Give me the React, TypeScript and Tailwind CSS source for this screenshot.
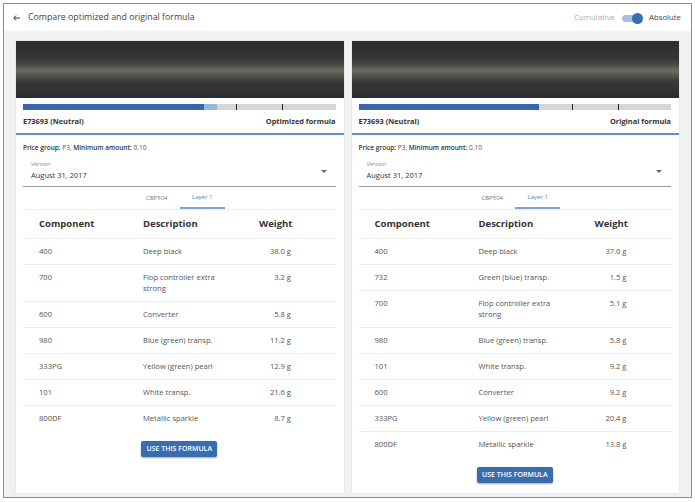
import React from 'react';

type Row = { code: string; desc: string; weight: string };

const optimized: Row[] = [
  { code: '400', desc: 'Deep black', weight: '38.0 g' },
  { code: '700', desc: 'Flop controller extra strong', weight: '3.2 g' },
  { code: '600', desc: 'Converter', weight: '5.8 g' },
  { code: '980', desc: 'Blue (green) transp.', weight: '11.2 g' },
  { code: '333PG', desc: 'Yellow (green) pearl', weight: '12.9 g' },
  { code: '101', desc: 'White transp.', weight: '21.6 g' },
  { code: '800DF', desc: 'Metallic sparkle', weight: '8.7 g' },
];

const original: Row[] = [
  { code: '400', desc: 'Deep black', weight: '37.0 g' },
  { code: '732', desc: 'Green (blue) transp.', weight: '1.5 g' },
  { code: '700', desc: 'Flop controller extra strong', weight: '5.1 g' },
  { code: '980', desc: 'Blue (green) transp.', weight: '5.8 g' },
  { code: '101', desc: 'White transp.', weight: '9.2 g' },
  { code: '600', desc: 'Converter', weight: '9.2 g' },
  { code: '333PG', desc: 'Yellow (green) pearl', weight: '20.4 g' },
  { code: '800DF', desc: 'Metallic sparkle', weight: '13.8 g' },
];

function ProgressBar({ blue, light }: { blue: number; light?: number }) {
  return (
    <div className="relative h-[6px] bg-[#d6d6d6]">
      {light && <div className="absolute left-0 top-0 h-full bg-[#9ab6da]" style={{ width: `${light}%` }} />}
      <div className="absolute left-0 top-0 h-full bg-[#3768ad]" style={{ width: `${blue}%` }} />
      <div className="absolute top-0 h-full w-px bg-[#222]" style={{ left: '68.3%' }} />
      <div className="absolute top-0 h-full w-px bg-[#222]" style={{ left: '83%' }} />
    </div>
  );
}

function FormulaCard({ label, rows, blue, light }: { label: string; rows: Row[]; blue: number; light?: number }) {
  return (
    <div className="bg-white flex flex-col shadow-[0_0_1px_rgba(0,0,0,0.2)]">
      <div className="h-[57px] bg-[linear-gradient(180deg,#2b2e2c_0%,#333633_30%,#4b4c46_42%,#6c6c60_52%,#55564f_60%,#363935_72%,#2a2d2b_100%)]" />
      <div className="pt-[6px] pl-[7px] pr-[8px]">
        <ProgressBar blue={blue} light={light} />
      </div>
      <div className="h-[25px] pl-[7px] pr-[8px] flex items-center justify-between border-b-2 border-[#5f90d2] text-[7.4px] font-bold text-[#333]">
        <span>E73693 (Neutral)</span>
        <span>{label}</span>
      </div>
      <div className="pl-[7px] pr-[8px]">
        <div className="pt-[9px] text-[6.5px] text-[#555] leading-[8px]">
          <span className="font-semibold text-[#333]">Price group:</span> P3, <span className="font-semibold text-[#333]">Minimum amount:</span> 0.10
        </div>
        <div className="mt-[9px] border-b border-[#9a9a9a] pl-[8px] pr-[9px] pb-[5px] flex items-end justify-between">
          <div>
            <div className="text-[5.5px] text-[#888] leading-[7px]">Version</div>
            <div className="text-[7.5px] text-[#333] leading-[11px] mt-[2px]">August 31, 2017</div>
          </div>
          <svg width="6" height="4" viewBox="0 0 6 4" className="mb-[7px]">
            <path d="M0 0 L6 0 L3 3 Z" fill="#666" />
          </svg>
        </div>
        <div className="flex justify-center border-b border-[#ececec] text-[6px]">
          <div className="w-[46px] h-[22px] flex items-center justify-center text-[#777]">CBP504</div>
          <div className="w-[45px] h-[22px] flex items-center justify-center text-[#4a7fc4] border-b-2 border-[#7ea3d6] mb-[-1px]">Layer 1</div>
        </div>
        <div className="grid grid-cols-[104px_116px_32px] pl-[16px] py-[8px] leading-[12px] border-b border-[#ececec] text-[9.5px] font-bold text-[#333]">
          <span>Component</span>
          <span>Description</span>
          <span className="text-right whitespace-nowrap">Weight</span>
        </div>
        {rows.map((r, i) => (
          <div
            key={r.code + i}
            className={`grid grid-cols-[104px_84px_64px] pl-[16px] py-[7px] leading-[11px] text-[7.6px] text-[#555] ${i < rows.length - 1 ? 'border-b border-[#ececec]' : ''}`}
          >
            <span>{r.code}</span>
            <span>{r.desc}</span>
            <span className="text-right">{r.weight}</span>
          </div>
        ))}
        <div className="flex justify-center mt-[10px]">
          <button className="w-[76px] h-[16px] rounded-[2px] bg-[#3a6cb0] text-white text-[7px] font-semibold shadow-[0_1px_2px_rgba(0,0,0,0.35)]">
            USE THIS FORMULA
          </button>
        </div>
      </div>
    </div>
  );
}

export default function App() {
  return (
    <div className="w-[695px] h-[502px] bg-white pt-[3px] pl-[3px]" style={{ fontFamily: '"Open Sans", sans-serif' }}>
      <div className="w-[689px] h-[495px] border border-[#8c8c8c] flex flex-col">
        <header className="h-[27px] shrink-0 bg-white flex items-center justify-between pl-[9px] pr-[10px] pt-px">
          <div className="flex items-center gap-[8px]">
            <svg width="7" height="6" viewBox="0 0 7 6">
              <path d="M7 3 H1 M3 0.6 L0.8 3 L3 5.4" stroke="#333" strokeWidth="1" fill="none" />
            </svg>
            <span className="text-[8.8px] text-[#444]">Compare optimized and original formula</span>
          </div>
          <div className="flex items-center text-[7.8px]">
            <span className="text-[#aaa]">Cumulative</span>
            <div className="relative ml-[7px] w-[20px] h-[7px] rounded-full bg-[#a5bfe0]">
              <div className="absolute right-[-1px] top-[-2px] w-[11px] h-[11px] rounded-full bg-[#3a6cb0]" />
            </div>
            <span className="ml-[7px] text-[#444]">Absolute</span>
          </div>
        </header>
        <main className="flex-1 bg-[#f1f1f1] pt-[10px] px-[12px] pb-[4px] grid grid-cols-2 gap-[8px]">
          <FormulaCard label="Optimized formula" rows={optimized} blue={58} light={62} />
          <FormulaCard label="Original formula" rows={original} blue={57.7} />
        </main>
      </div>
    </div>
  );
}
